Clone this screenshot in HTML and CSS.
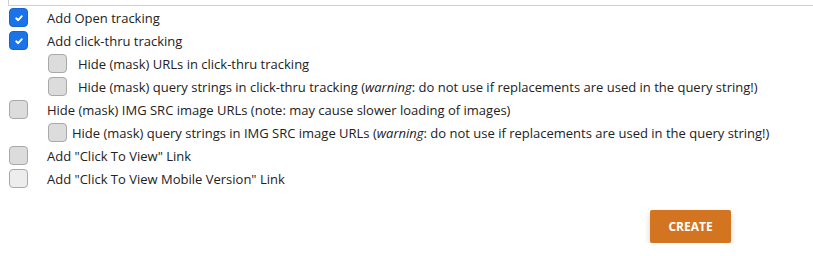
FILE: index.html
```html
<!DOCTYPE html>
<html>
<head>
<meta charset="utf-8">
<link rel="stylesheet" href="styles.css">
</head>
<body>
<div class="topbox"></div>
<div class="options">
  <label class="row"><span class="cb checked"><svg viewBox="0 0 10 10" width="10" height="10"><path d="M2.2 5.3 L4.2 7.2 L7.8 3.2" fill="none" stroke="#fff" stroke-width="1.9" stroke-linecap="round" stroke-linejoin="round"/></svg></span><span class="txt">Add Open tracking</span></label>
  <label class="row"><span class="cb checked"><svg viewBox="0 0 10 10" width="10" height="10"><path d="M2.2 5.3 L4.2 7.2 L7.8 3.2" fill="none" stroke="#fff" stroke-width="1.9" stroke-linecap="round" stroke-linejoin="round"/></svg></span><span class="txt">Add click-thru tracking</span></label>
  <label class="row sub"><span class="cb"></span><span class="txt">Hide (mask) URLs in click-thru tracking</span></label>
  <label class="row sub"><span class="cb"></span><span class="txt">Hide (mask) query strings in click-thru tracking (<em>warning</em>: do not use if replacements are used in the query string!)</span></label>
  <label class="row"><span class="cb"></span><span class="txt">Hide (mask) IMG SRC image URLs (note: may cause slower loading of images)</span></label>
  <label class="row sub tight"><span class="cb"></span><span class="txt">Hide (mask) query strings in IMG SRC image URLs (<em>warning</em>: do not use if replacements are used in the query string!)</span></label>
  <label class="row"><span class="cb"></span><span class="txt">Add "Click To View" Link</span></label>
  <label class="row"><span class="cb light"></span><span class="txt">Add "Click To View Mobile Version" Link</span></label>
</div>
<div class="actions">
  <button class="create">CREATE</button>
</div>
</body>
</html>
```
FILE: styles.css
```css
html, body {
  margin: 0;
  padding: 0;
  background: #fff;
}
body {
  font-family: "Open Sans", "Liberation Sans", sans-serif;
  font-size: 13px;
  color: #222;
}
.topbox {
  margin-left: 8px;
  height: 5px;
  border-left: 1px solid #cfcfcf;
  border-bottom: 1px solid #cfcfcf;
}
.options {
  display: flex;
  flex-direction: column;
}
.row {
  display: flex;
  align-items: center;
  height: 23px;
  padding-left: 9px;
}
.row .cb {
  flex: 0 0 auto;
  width: 17px;
  height: 17px;
  border: 1px solid #a9a9a9;
  border-radius: 4px;
  background: #dcdcdc;
  margin-right: 19px;
  display: flex;
  align-items: center;
  justify-content: center;
}
.row .cb.checked {
  background: #1a73e8;
  border-color: #1565d0;
}
.row .cb.light {
  background: #ededed;
}
.row.sub {
  padding-left: 48px;
}
.row.sub .cb {
  margin-right: 11px;
}
.row.sub.tight .cb {
  margin-right: 5px;
}
.txt em {
  font-style: italic;
}
.actions {
  display: flex;
  justify-content: flex-end;
  padding-right: 82px;
  padding-top: 20px;
}
.create {
  width: 81px;
  height: 33px;
  border: none;
  border-radius: 2px;
  background: #d27420;
  color: #fff;
  font-family: "Open Sans", "Liberation Sans", sans-serif;
  font-weight: 700;
  font-size: 12px;
  box-shadow: 0 3px 6px rgba(0,0,0,0.18);
}
```
